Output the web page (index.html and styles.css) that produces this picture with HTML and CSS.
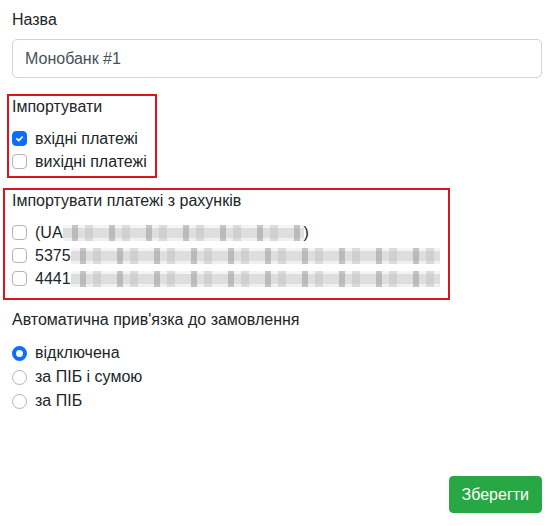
FILE: index.html
```html
<!DOCTYPE html>
<html lang="uk">
<head>
<meta charset="utf-8">
<title>Монобанк #1</title>
<link rel="stylesheet" href="styles.css">
</head>
<body>
<form class="page">
  <div class="group">
    <div class="label">Назва</div>
    <div class="input">Монобанк #1</div>
  </div>

  <div class="annot annot-1">
    <div class="label label-tight">Імпортувати</div>
    <div class="check-row">
      <span class="box box-on"><svg viewBox="0 0 20 20" width="15" height="15"><path d="M6 10.5l2.8 2.8l5.4-5.6" fill="none" stroke="#fff" stroke-width="2.6" stroke-linecap="round" stroke-linejoin="round"/></svg></span>
      <span class="text">вхідні платежі</span>
    </div>
    <div class="check-row">
      <span class="box"></span>
      <span class="text">вихідні платежі</span>
    </div>
  </div>

  <div class="annot annot-2">
    <div class="label label-tight">Імпортувати платежі з рахунків</div>
    <div class="check-row">
      <span class="box"></span>
      <span class="text">(UA<span class="mask mask-a"></span>)</span>
    </div>
    <div class="check-row">
      <span class="box"></span>
      <span class="text">5375<span class="mask mask-b"></span></span>
    </div>
    <div class="check-row">
      <span class="box"></span>
      <span class="text">4441<span class="mask mask-c"></span></span>
    </div>
  </div>

  <div class="group group-radio">
    <div class="label label-radio">Автоматична прив'язка до замовлення</div>
    <div class="check-row radio-row">
      <span class="radio radio-on"></span>
      <span class="text">відключена</span>
    </div>
    <div class="check-row radio-row">
      <span class="radio"></span>
      <span class="text">за ПІБ і сумою</span>
    </div>
    <div class="check-row radio-row">
      <span class="radio"></span>
      <span class="text">за ПІБ</span>
    </div>
  </div>

  <div class="actions">
    <button type="button" class="btn-save">Зберегти</button>
  </div>
</form>
</body>
</html>
```

FILE: styles.css
```css
html, body {
  margin: 0;
  padding: 0;
  background: #fff;
}

body {
  font-family: "Liberation Sans", Arial, sans-serif;
  font-size: 16px;
  line-height: 24px;
  color: #212529;
}

.page {
  width: 530px;
  padding: 8px 14px 0 12px;
}

.group {
  margin-bottom: 16px;
}

.label {
  margin-bottom: 7px;
}

.label-tight {
  margin-bottom: 8px;
}

.label-radio {
  margin-bottom: 9px;
}

.input {
  height: 37px;
  line-height: 37px;
  border: 1px solid #ced4da;
  border-radius: 5px;
  padding: 0 12px;
  color: #495057;
}

.annot {
  border: 2px solid #d7161e;
  box-sizing: border-box;
}

.annot-1 {
  width: 150px;
  margin-left: -5px;
  padding: 0 0 3px 3px;
  margin-bottom: 10px;
}

.annot-2 {
  width: 447px;
  margin-left: -9px;
  padding: 0 0 8px 7px;
  margin-bottom: 8px;
}

.annot .label {
  margin-top: -1px;
}

.check-row {
  display: flex;
  align-items: center;
  height: 23px;
  gap: 8px;
}

.radio-row {
  height: 24px;
}

.box {
  width: 15px;
  height: 15px;
  box-sizing: border-box;
  border: 1px solid #b4b4b4;
  border-radius: 4px;
  flex: none;
  display: flex;
  align-items: center;
  justify-content: center;
  background: #fff;
}

.box-on {
  background: #0d6efd;
  border-color: #0d6efd;
}

.radio {
  width: 15px;
  height: 15px;
  box-sizing: border-box;
  border: 1px solid #b4b4b4;
  border-radius: 50%;
  flex: none;
  background: #fff;
}

.radio-on {
  border: 4.5px solid #0d6efd;
}

.text {
  display: flex;
  align-items: center;
  white-space: nowrap;
}

.mask {
  display: inline-block;
  height: 16px;
  background:
    repeating-linear-gradient(90deg, transparent 0 9px, rgba(150,150,150,0.5) 9px 15px, transparent 15px 22px, rgba(190,190,190,0.45) 22px 30px, transparent 30px 37px),
    linear-gradient(180deg, #f4f4f4 0 3px, #dedede 3px 13px, #f0f0f0 13px 16px);
}

.mask-a {
  width: 241px;
}

.mask-b {
  width: 369px;
}

.mask-c {
  width: 369px;
}

.actions {
  display: flex;
  justify-content: flex-end;
  padding-top: 47px;
}

.btn-save {
  font-family: "Liberation Sans", Arial, sans-serif;
  font-size: 16px;
  line-height: 24px;
  color: #fff;
  background: #28a745;
  border: 1px solid #28a745;
  border-radius: 4px;
  padding: 6px 12px;
  height: 37px;
  cursor: pointer;
}
```
